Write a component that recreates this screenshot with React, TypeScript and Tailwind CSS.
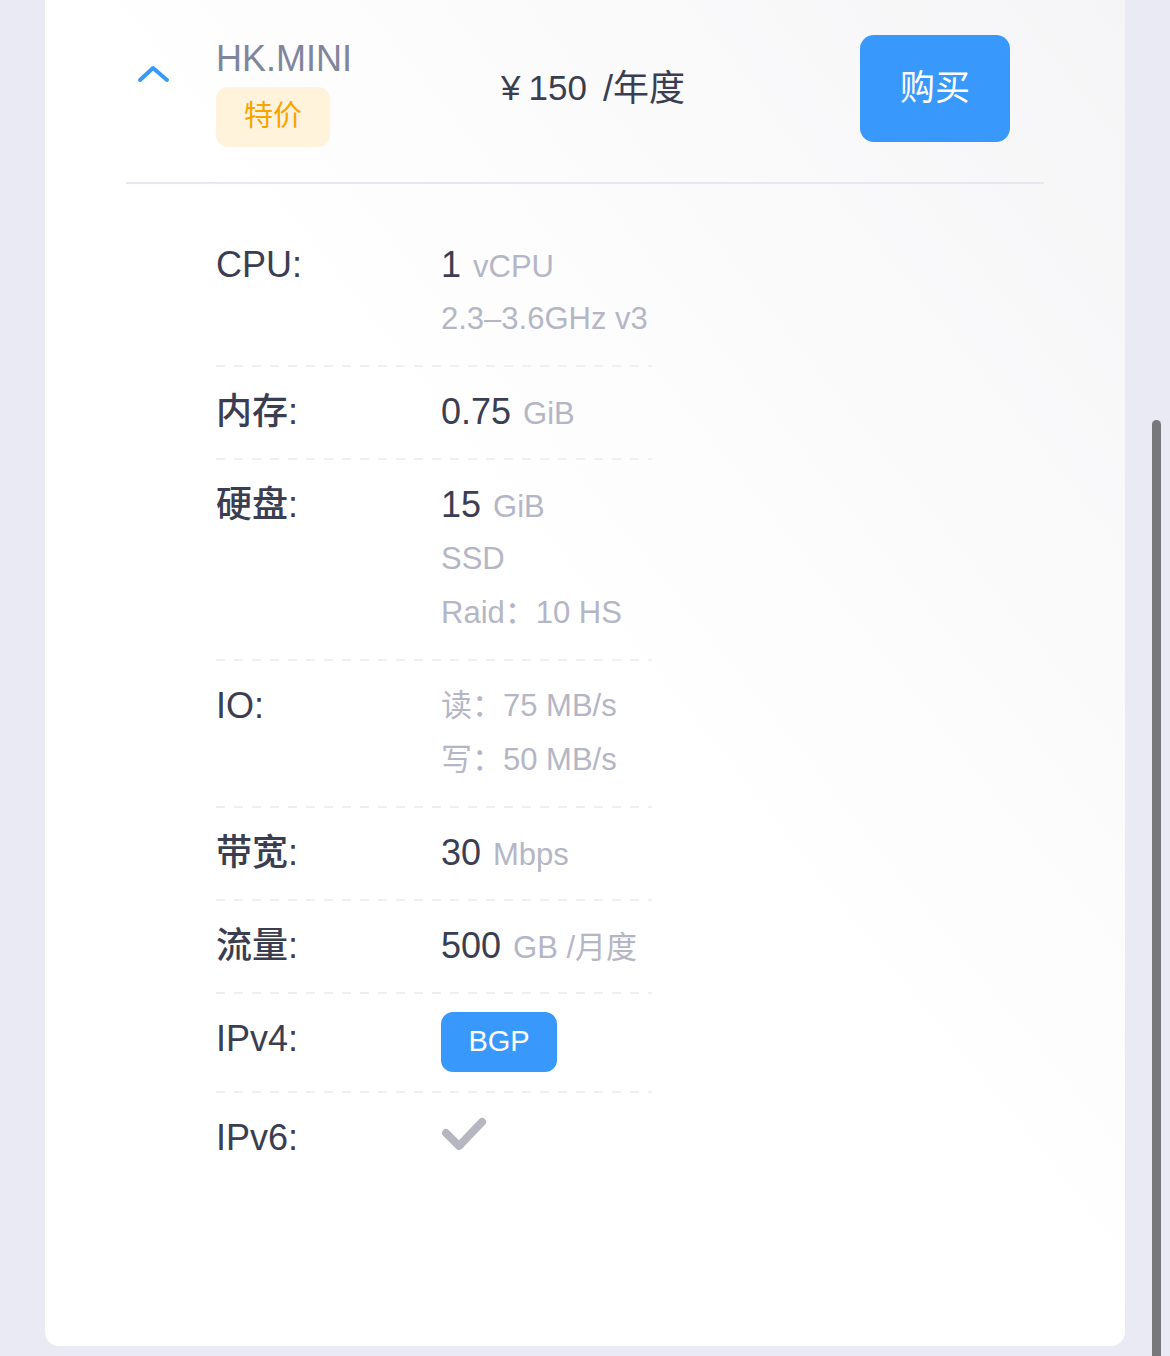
import React from 'react';

const FONT = "font-['Liberation_Sans','Noto_Sans_CJK_SC',sans-serif]";

interface SpecLine {
  main?: string;
  unit?: string;
}

interface Spec {
  label: string;
  lines?: SpecLine[];
  node?: React.ReactNode;
}

const Check = () => (
  <svg width="46" height="36" viewBox="0 0 46 36" className="mt-[5px]">
    <polyline points="5,17 18,30 41,6" fill="none" stroke="#b6b6c1" strokeWidth="8" strokeLinecap="round" strokeLinejoin="round" />
  </svg>
);

const SPECS: Spec[] = [
  { label: 'CPU:', lines: [{ main: '1', unit: 'vCPU' }, { unit: '2.3–3.6GHz v3' }] },
  { label: '内存:', lines: [{ main: '0.75', unit: 'GiB' }] },
  { label: '硬盘:', lines: [{ main: '15', unit: 'GiB' }, { unit: 'SSD' }, { unit: 'Raid：10 HS' }] },
  { label: 'IO:', lines: [{ unit: '读：75 MB/s' }, { unit: '写：50 MB/s' }] },
  { label: '带宽:', lines: [{ main: '30', unit: 'Mbps' }] },
  { label: '流量:', lines: [{ main: '500', unit: 'GB /月度' }] },
  {
    label: 'IPv4:',
    node: (
      <span className="inline-flex items-center justify-center w-[116px] h-[60px] rounded-[12px] bg-[#3898fc] text-white text-[29px]">
        BGP
      </span>
    ),
  },
  { label: 'IPv6:', node: <Check /> },
];

const Dashes = () => (
  <div className="h-[2px] w-[436px] bg-[linear-gradient(to_right,#eef0f5_50%,transparent_50%)] bg-[length:18px_2px]" />
);

export default function App() {
  return (
    <div className={`relative w-[1170px] h-[1356px] overflow-hidden bg-[#e9eaf3] ${FONT}`}>
      <div className="ml-[45px] w-[1080px] h-[1346px] rounded-b-[14px] bg-gradient-to-bl from-[#f5f5f7] via-white to-white">
        {/* header */}
        <div className="ml-[81px] w-[918px] h-[184px] flex items-start pt-[35px] border-b-2 border-[#e6e8f0]">
          <div className="w-[90px] pl-[11px] pt-[29px]">
            <svg width="34" height="20" viewBox="0 0 34 20">
              <polyline points="3,16 16,4 30,16" fill="none" stroke="#3898fc" strokeWidth="4" strokeLinecap="round" strokeLinejoin="round" />
            </svg>
          </div>
          <div className="w-[285px] flex flex-col items-start">
            <div className="text-[36px] leading-[44px] text-[#80859a] mt-[2px]">HK.MINI</div>
            <span className="mt-[6px] w-[114px] h-[60px] rounded-[12px] bg-[#fff3dc] text-[#f7a300] text-[29px] flex items-center justify-center">
              特价
            </span>
          </div>
          <div className="w-[359px] h-[107px] flex items-center text-[35px] text-[#3b3e50]">
            <span>¥</span>
            <span className="ml-[8px]">150</span>
            <span className="ml-[16px] text-[36px]">/年度</span>
          </div>
          <button className="w-[150px] h-[107px] rounded-[14px] bg-[#3898fc] text-white text-[35px]">
            购买
          </button>
        </div>

        {/* specs */}
        <div className="ml-[171px] w-[436px] pt-[36px]">
          {SPECS.map((s, i) => (
            <div key={i}>
              <div className="flex pt-[18px] pb-[19px]">
                <div className="w-[225px] h-[54px] text-[36px] leading-[54px] font-medium text-[#3b3e50]">{s.label}</div>
                <div className="flex flex-col">
                  {s.node
                    ? s.node
                    : s.lines!.map((l, j) => (
                        <div key={j} className="h-[54px] leading-[54px] whitespace-nowrap">
                          {l.main && <span className="text-[36px] leading-[54px] text-[#3b3e50] mr-[12px]">{l.main}</span>}
                          <span className="text-[31px] leading-[54px] text-[#b5b6c5]">{l.unit}</span>
                        </div>
                      ))}
                </div>
              </div>
              {i < SPECS.length - 1 && <Dashes />}
            </div>
          ))}
        </div>
      </div>

      {/* overlay scrollbar */}
      <div className="absolute left-[1152px] top-[420px] w-[9px] h-[960px] rounded-full bg-[#77787c]" />
    </div>
  );
}
